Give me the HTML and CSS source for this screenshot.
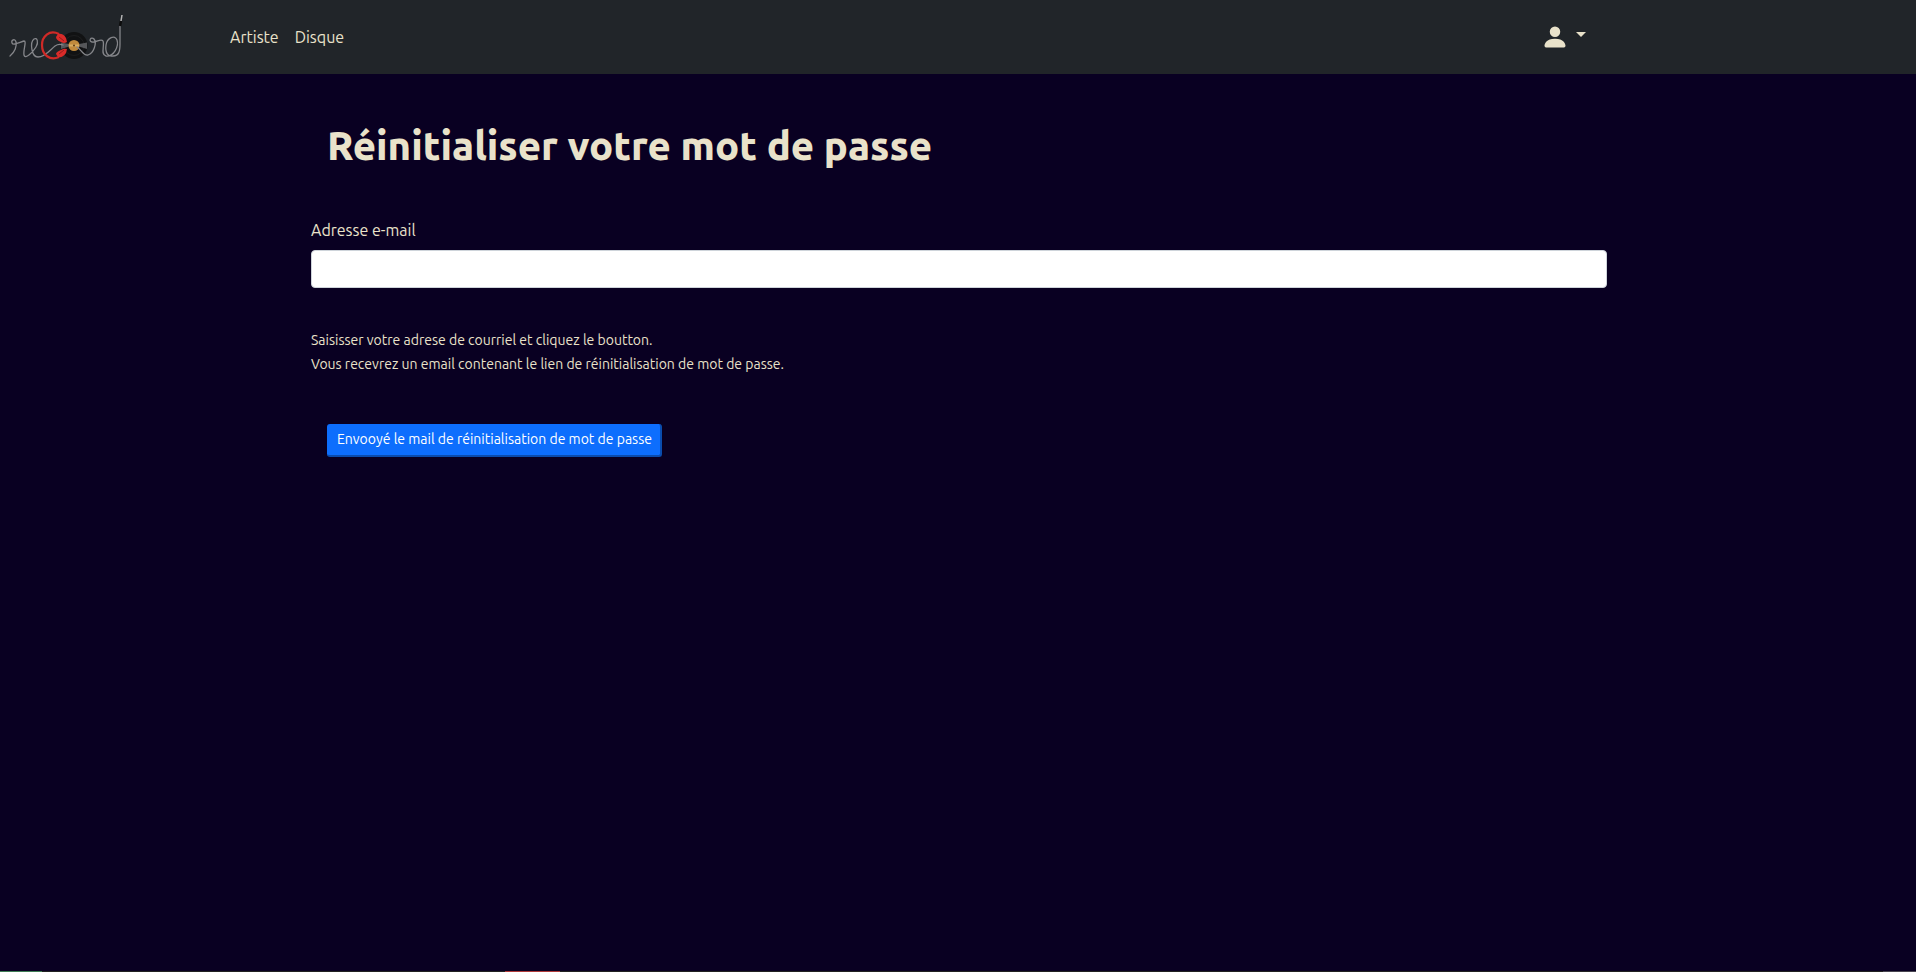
FILE: index.html
```html
<!DOCTYPE html>
<html lang="fr">
<head>
<meta charset="utf-8">
<title>Réinitialiser votre mot de passe</title>
<link rel="stylesheet" href="styles.css">
</head>
<body>
<header class="navbar">
  <a class="brand" href="#" aria-label="Record">
    <svg width="116" height="50" viewBox="8 12 116 50" fill="none">
      <circle cx="74" cy="45.500" r="13.5" fill="#111213"/>
      <circle cx="74" cy="45.500" r="10" stroke="#1d1e1f"/>
      <path d="M61 42.500 74 45 61 49zM87 42.500 74 45 87 49z" fill="#56575a"/>
      <circle cx="74" cy="45.500" r="5.500" fill="#c08a3c"/>
      <path d="M69 44.500h10v2H69z" fill="#d9ae62"/>
      <circle cx="74" cy="45.500" r="1" fill="#5a3a12"/>
      <g stroke="#85868a" stroke-width="1.300" stroke-linecap="round" stroke-linejoin="round">
        <path d="M10 56C15 52 17 46 16 42C15 38 11 40 12 43C13 46 20 42 24 41C27 41 23 50 24 55C25 60 33 52 36 47C39 42 37 37 34 39C30 42 31 57 38 57C45 57 50 50 55 46C58 44 60 44 63 45"/>
        <path d="M77 47C82 50 83 56 88 55C94 53 97 43 94 39C91 36 88 41 92 42C96 43 101 38 103 41C105 45 100 55 106 56C114 57 119 46 117 40C115 34 107 38 106 45C105 53 108 57 113 56C119 56 120 51 120 44V25"/>
      </g>
      <path d="M59 34C49 29 42 37 42 45C42 55 50 61 59 57" stroke="#cf2a27" stroke-width="2.200"/>
      <path d="M58 34q5-1 8 4l1 4q-3 2-6 0-5-2-5-5zM58 57q5 1 8-4l1-4q-3-1-6 1-5 2-5 4z" fill="#d92b29"/>
      <path d="M59 37l5 4M59 54l5-4" stroke="#941c1c"/>
      <path d="M120 26l1-5" stroke="#0c0c0c" stroke-width="2.500"/>
      <path d="M121 21l1-6" stroke="#b5b5b5" stroke-width="1.500"/>
    </svg>
  </a>
  <nav class="links">
    <a href="#">Artiste</a>
    <a href="#">Disque</a>
  </nav>
  <button class="account" type="button" aria-label="Compte">
    <svg width="28" height="28" viewBox="0 0 16 16" fill="currentColor"><path d="M3 14s-1 0-1-1 1-4 6-4 6 3 6 4-1 1-1 1zm5-6a3 3 0 1 0 0-6 3 3 0 0 0 0 6"/></svg>
    <span class="caret"></span>
  </button>
</header>
<main class="container">
  <h1>Réinitialiser votre mot de passe</h1>
  <form>
    <label for="email">Adresse e-mail</label>
    <input id="email" type="email">
    <p class="help">Saisisser votre adrese de courriel et cliquez le boutton.<br>Vous recevrez un email contenant le lien de réinitialisation de mot de passe.</p>
    <button class="submit" type="submit">Envooyé le mail de réinitialisation de mot de passe</button>
  </form>
</main>
<div class="strip"><span class="green"></span><span class="red"></span><span class="grey"></span></div>
</body>
</html>
```
FILE: styles.css
```css
* { box-sizing: border-box; }
body {
  margin: 0;
  min-height: 100vh;
  display: flex;
  flex-direction: column;
  background: #090022;
  color: #e9e2ca;
  font: 450 16px/24px Ubuntu, "Noto Sans", sans-serif;
}
.navbar {
  display: flex;
  align-items: center;
  padding: 12px 330px 12px 8px;
  background: #212529;
}
.brand { display: flex; width: 214px; }
.links { display: flex; flex: 1; }
.links a { padding: 8px; color: inherit; text-decoration: none; }
.account {
  display: flex;
  align-items: center;
  gap: 7px;
  padding: 0;
  border: 0;
  background: none;
  color: inherit;
}
.caret {
  margin-bottom: 5px;
  border: 5px solid transparent;
  border-top-color: currentColor;
  border-bottom: 0;
}
.container {
  width: 100%;
  max-width: 1320px;
  margin: 0 auto;
  padding: 48px 11px 48px 13px;
  flex: 1;
}
h1 {
  margin: 0 16px 48px;
  font-size: 40px;
  line-height: 48px;
  font-weight: 800;
}
form { display: flex; flex-direction: column; align-items: flex-start; }
label { margin-bottom: 8px; }
input {
  width: 100%;
  height: 38px;
  padding: 6px 12px;
  border: 1px solid #ced4da;
  border-radius: 4px;
  background: #fff;
  font: inherit;
}
.help { margin: 40px 0 48px; font-size: 14px; line-height: 24px; }
.submit {
  margin-left: 16px;
  padding: 4px 8px 4px 10px;
  border: 0 solid #0a4cae;
  border-width: 0 2px 2px 0;
  border-radius: 3px;
  background: #0d6efd;
  color: #fff;
  font: inherit;
  font-size: 14px;
  line-height: 23px;
}
.strip { display: flex; height: 1px; background: #222; }
.green { width: 42px; background: #3f7d55; }
.red { width: 55px; margin-left: 463px; background: #b03a3a; }
.grey { width: 33px; margin-left: auto; background: #484450; }
```
